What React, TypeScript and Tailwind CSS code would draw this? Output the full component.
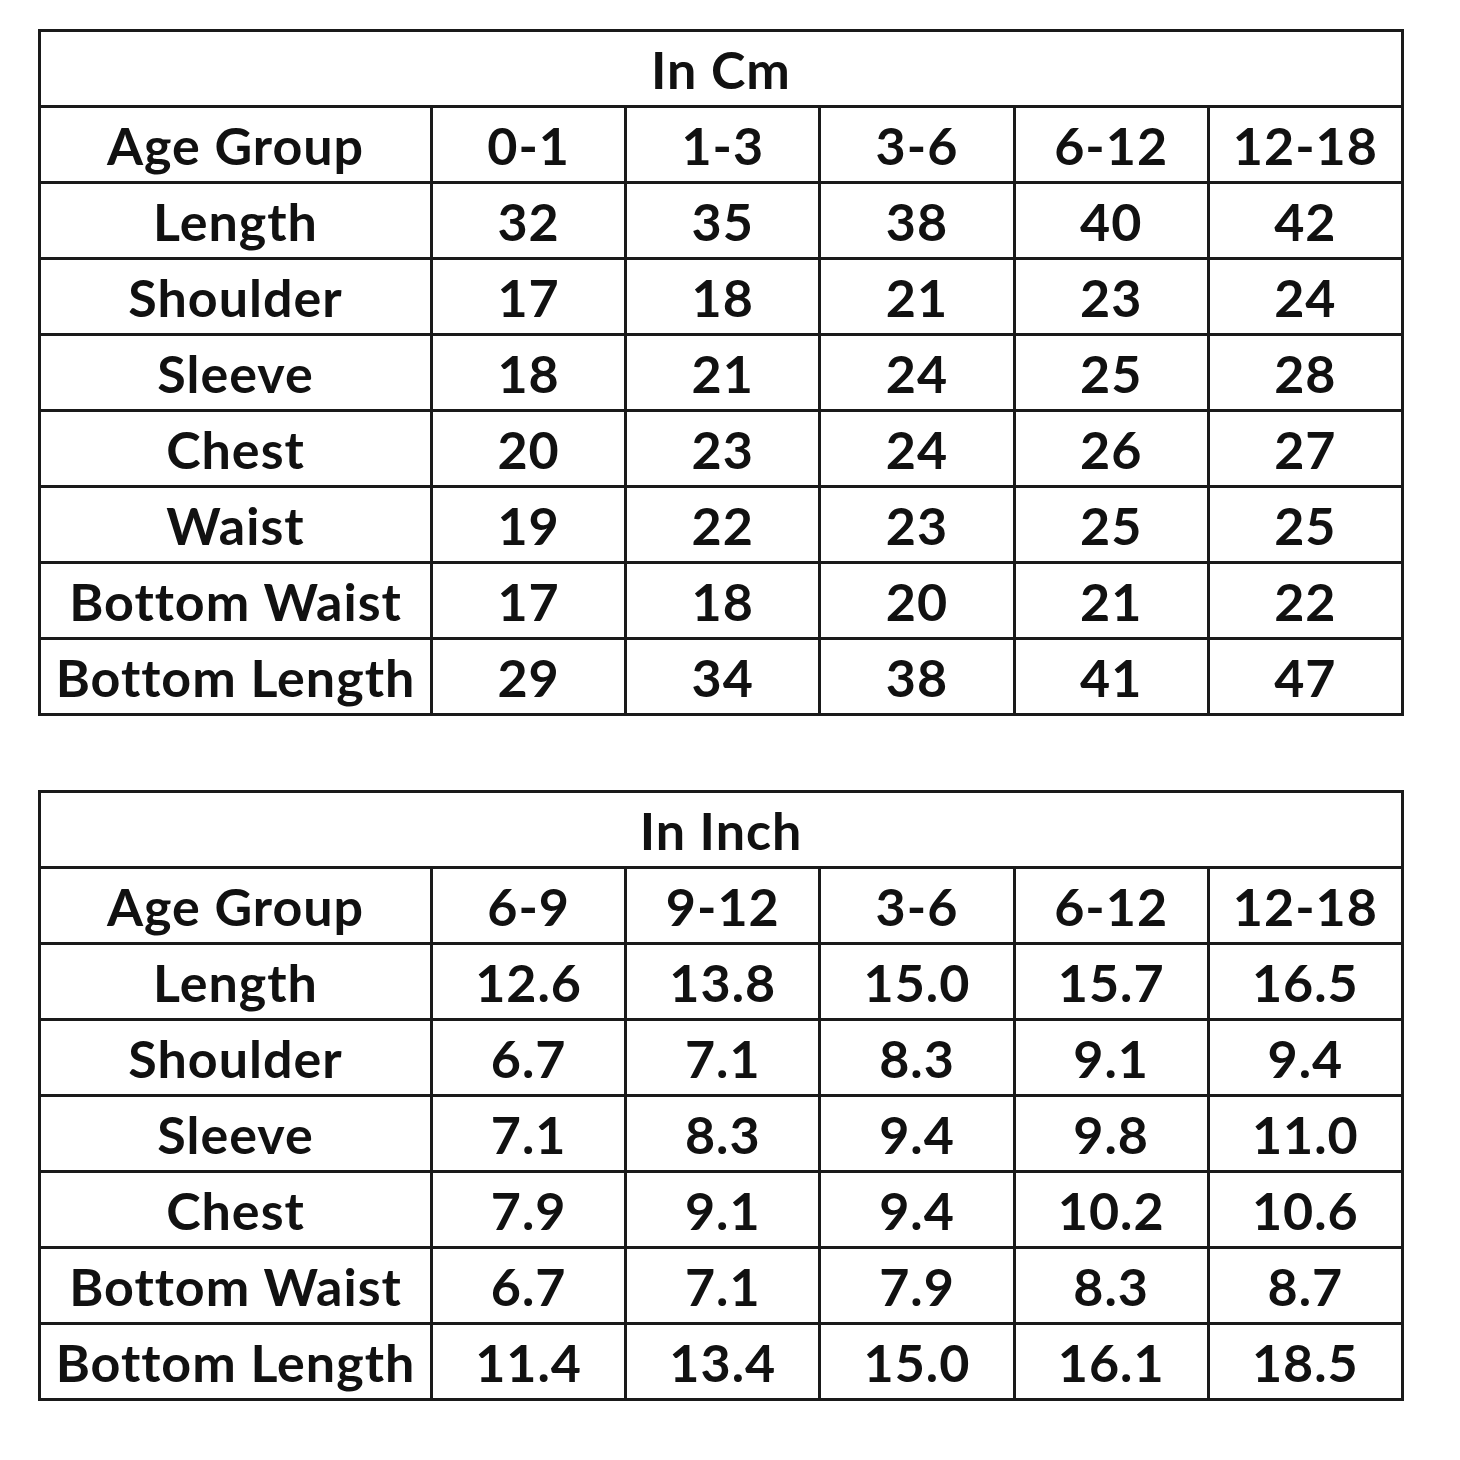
const cmRows: string[][] = [
  ["Age Group", "0-1", "1-3", "3-6", "6-12", "12-18"],
  ["Length", "32", "35", "38", "40", "42"],
  ["Shoulder", "17", "18", "21", "23", "24"],
  ["Sleeve", "18", "21", "24", "25", "28"],
  ["Chest", "20", "23", "24", "26", "27"],
  ["Waist", "19", "22", "23", "25", "25"],
  ["Bottom Waist", "17", "18", "20", "21", "22"],
  ["Bottom Length", "29", "34", "38", "41", "47"],
];

const inchRows: string[][] = [
  ["Age Group", "6-9", "9-12", "3-6", "6-12", "12-18"],
  ["Length", "12.6", "13.8", "15.0", "15.7", "16.5"],
  ["Shoulder", "6.7", "7.1", "8.3", "9.1", "9.4"],
  ["Sleeve", "7.1", "8.3", "9.4", "9.8", "11.0"],
  ["Chest", "7.9", "9.1", "9.4", "10.2", "10.6"],
  ["Bottom Waist", "6.7", "7.1", "7.9", "8.3", "8.7"],
  ["Bottom Length", "11.4", "13.4", "15.0", "16.1", "18.5"],
];

const SizeTable = ({ title, rows }: { title: string; rows: string[][] }) => {
  return (
    <table className="w-[1366px] table-fixed border-collapse border-[3px] border-[#1a1a1a]">
      <colgroup>
        <col className="w-[392px]" />
        <col />
        <col />
        <col />
        <col />
        <col />
      </colgroup>
      <tbody>
        <tr className="h-[76px]">
          <td colSpan={6} className="border-[3px] border-[#1a1a1a] p-0 text-center align-middle">
            {title}
          </td>
        </tr>
        {rows.map((row) => (
          <tr key={row[0]} className="h-[76px]">
            {row.map((cell, i) => (
              <td key={i} className="border-[3px] border-[#1a1a1a] p-0 text-center align-middle whitespace-nowrap">
                {cell}
              </td>
            ))}
          </tr>
        ))}
      </tbody>
    </table>
  );
};

export default function App() {
  return (
    <div className="h-[1460px] w-[1460px] bg-white pl-[38px] pt-[29px] font-['Lato','Open_Sans',sans-serif] text-[52px] font-bold leading-none tracking-[1px] text-[#111]">
      <SizeTable title="In Cm" rows={cmRows} />
      <div className="h-[74px]" />
      <SizeTable title="In Inch" rows={inchRows} />
    </div>
  );
}
